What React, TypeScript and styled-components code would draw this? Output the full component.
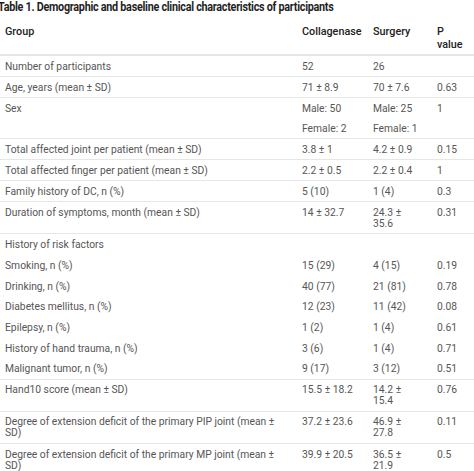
import React from "react";
import styled, { createGlobalStyle } from "styled-components";

const GlobalStyle = createGlobalStyle`
  html, body {
    margin: 0;
    padding: 0;
    background: #ffffff;
  }
  body {
    font-family: Roboto, "Liberation Sans", sans-serif;
    overflow: hidden;
  }
`;

const Page = styled.div`
  width: 474px;
  height: 471px;
  overflow: hidden;
`;

const Caption = styled.div`
  margin-left: -2px;
  padding-top: 1px;
  height: 17px;
  width: 380px;
  font-size: 12px;
  line-height: 12px;
  font-weight: 700;
  color: #1f1f1f;
  white-space: nowrap;
  letter-spacing: -0.3px;
  transform: scaleX(0.9);
  transform-origin: left top;
`;

const Table = styled.table`
  width: 474px;
  border-collapse: collapse;
  table-layout: fixed;
  margin-top: 5px;
`;

const Head = styled.th<{ $w: number }>`
  box-sizing: border-box;
  width: ${(p) => p.$w}px;
  text-align: left;
  vertical-align: top;
  font-size: 10.8px;
  line-height: 13px;
  font-weight: 500;
  color: #222222;
  padding: 2px 12px 3px 5px;
  border-bottom: 2px solid #e6e6e6;
`;

const Row = styled.tr<{ $line?: boolean }>`
  border-bottom: ${(p) => (p.$line ? "1px solid #e6e6e6" : "none")};

  td {
    padding-top: ${(p) => (p.$line ? "4.5px" : "5px")};
    padding-bottom: ${(p) => (p.$line ? "4.5px" : "4.8px")};
  }
`;

const Cell = styled.td`
  vertical-align: top;
  font-size: 10.3px;
  line-height: 11px;
  color: #565656;
  padding-left: 5px;
  padding-right: 12px;
`;

const Stack = styled.div`
  display: flex;
  flex-direction: column;
  gap: 9px;
`;

type Line = {
  group: string;
  a: React.ReactNode;
  b: React.ReactNode;
  p: string;
  line?: boolean;
};

const rows: Line[] = [
  { group: "Number of participants", a: "52", b: "26", p: "", line: true },
  { group: "Age, years (mean ± SD)", a: "71 ± 8.9", b: "70 ± 7.6", p: "0.63", line: true },
  {
    group: "Sex",
    a: (
      <Stack>
        <span>Male: 50</span>
        <span>Female: 2</span>
      </Stack>
    ),
    b: (
      <Stack>
        <span>Male: 25</span>
        <span>Female: 1</span>
      </Stack>
    ),
    p: "1",
    line: true,
  },
  { group: "Total affected joint per patient (mean ± SD)", a: "3.8 ± 1", b: "4.2 ± 0.9", p: "0.15", line: true },
  { group: "Total affected finger per patient (mean ± SD)", a: "2.2 ± 0.5", b: "2.2 ± 0.4", p: "1", line: true },
  { group: "Family history of DC, n (%)", a: "5 (10)", b: "1 (4)", p: "0.3", line: true },
  { group: "Duration of symptoms, month (mean ± SD)", a: "14 ± 32.7", b: "24.3 ± 35.6", p: "0.31", line: true },
  { group: "History of risk factors", a: "", b: "", p: "" },
  { group: "Smoking, n (%)", a: "15 (29)", b: "4 (15)", p: "0.19" },
  { group: "Drinking, n (%)", a: "40 (77)", b: "21 (81)", p: "0.78" },
  { group: "Diabetes mellitus, n (%)", a: "12 (23)", b: "11 (42)", p: "0.08" },
  { group: "Epilepsy, n (%)", a: "1 (2)", b: "1 (4)", p: "0.61" },
  { group: "History of hand trauma, n (%)", a: "3 (6)", b: "1 (4)", p: "0.71" },
  { group: "Malignant tumor, n (%)", a: "9 (17)", b: "3 (12)", p: "0.51", line: true },
  { group: "Hand10 score (mean ± SD)", a: "15.5 ± 18.2", b: "14.2 ± 15.4", p: "0.76", line: true },
  {
    group: "Degree of extension deficit of the primary PIP joint (mean ± SD)",
    a: "37.2 ± 23.6",
    b: "46.9 ± 27.8",
    p: "0.11",
    line: true,
  },
  {
    group: "Degree of extension deficit of the primary MP joint (mean ± SD)",
    a: "39.9 ± 20.5",
    b: "36.5 ± 21.9",
    p: "0.5",
  },
];

const App = () => {
  return (
    <Page>
      <GlobalStyle />
      <Caption>Table 1. Demographic and baseline clinical characteristics of participants</Caption>
      <Table>
        <thead>
          <tr>
            <Head $w={297}>Group</Head>
            <Head $w={71}>Collagenase</Head>
            <Head $w={64}>Surgery</Head>
            <Head $w={42}>P value</Head>
          </tr>
        </thead>
        <tbody>
          {rows.map((r) => (
            <Row key={r.group} $line={r.line}>
              <Cell>{r.group}</Cell>
              <Cell>{r.a}</Cell>
              <Cell>{r.b}</Cell>
              <Cell>{r.p}</Cell>
            </Row>
          ))}
        </tbody>
      </Table>
    </Page>
  );
};

export default App;
